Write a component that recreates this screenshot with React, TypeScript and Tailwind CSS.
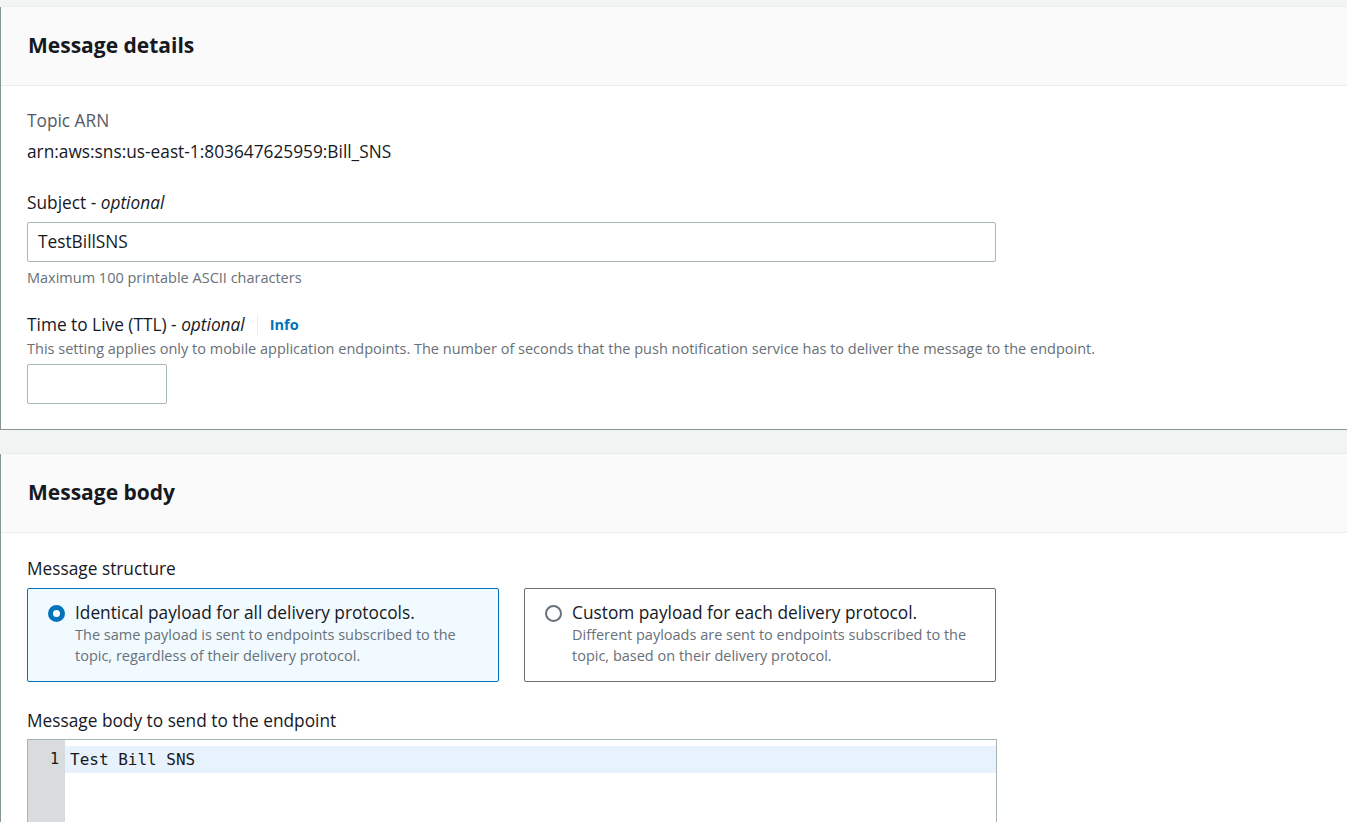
const font = { fontFamily: '"Open Sans", "Noto Sans", Arial, sans-serif' };

const Card = ({ title, children }: { title: string; children: React.ReactNode }) => (
  <section className="ml-px mr-[-40px] bg-white border-t border-[#eaeded] shadow-[-1px_1px_0_0_#879596]">
    <div className="h-[79px] flex items-center px-[27px] bg-[#fafafa] border-b border-[#eaeded]">
      <h2 className="text-[21px] leading-[28px] font-bold text-[#16191f] -mt-[2px]">{title}</h2>
    </div>
    <div className="px-[26px] pt-[19px] pb-[25px]">{children}</div>
  </section>
);

const RadioTile = ({
  checked,
  label,
  desc,
}: {
  checked: boolean;
  label: string;
  desc: string;
}) => (
  <div
    className={
      checked
        ? "w-[472px] h-[94px] rounded-[2px] border border-[#0073bb] bg-[#f1faff] flex gap-[10px] pl-[20px] pt-[13px]"
        : "w-[472px] h-[94px] rounded-[2px] border border-[#687078] bg-white flex gap-[10px] pl-[20px] pt-[13px]"
    }
  >
    <div className="pt-[3px]">
      {checked ? (
        <div className="w-[17px] h-[17px] rounded-full border-[5px] border-[#0073bb] bg-white" />
      ) : (
        <div className="w-[17px] h-[17px] rounded-full border-2 border-[#687078] bg-white" />
      )}
    </div>
    <div>
      <div className="text-[17.3px] leading-[22px] text-[#16191f]">{label}</div>
      <div className="text-[14.5px] leading-[20.5px] text-[#687078] w-[410px] mt-px">{desc}</div>
    </div>
  </div>
);

export default function App() {
  return (
    <div className="min-h-screen bg-[#f2f3f3] pt-[6px] overflow-hidden" style={font}>
      <Card title="Message details">
        <div className="text-[17.3px] leading-[22px] text-[#545b64] pt-[5px]">Topic ARN</div>
        <div className="text-[17.3px] leading-[22px] text-[#16191f] mt-[9px]">
          arn:aws:sns:us-east-1:803647625959:Bill_SNS
        </div>

        <div className="text-[17.3px] leading-[22px] text-[#16191f] mt-[29px]">
          Subject - <i>optional</i>
        </div>
        <div className="mt-[8px] w-[969px] h-[40px] rounded-[2px] border border-[#aab7b8] flex items-center px-[10px] text-[17.3px] text-[#16191f]">
          TestBillSNS
        </div>
        <div className="text-[14.5px] leading-[20px] text-[#687078] mt-[6px]">
          Maximum 100 printable ASCII characters
        </div>

        <div className="flex items-center mt-[26px]">
          <span className="text-[17.3px] leading-[22px] text-[#16191f]">
            Time to Live (TTL) - <i>optional</i>
          </span>
          <span className="ml-[12px] h-[20px] border-l border-[#eaeded]" />
          <span className="ml-[12px] text-[14.5px] font-bold text-[#0073bb]">Info</span>
        </div>
        <div className="text-[14.5px] leading-[20px] text-[#687078] mt-[3px]">
          This setting applies only to mobile application endpoints. The number of seconds that the push notification
          service has to deliver the message to the endpoint.
        </div>
        <div className="mt-[5px] w-[140px] h-[40px] rounded-[2px] border border-[#aab7b8]" />
      </Card>

      <div className="h-[24px]" />

      <Card title="Message body">
        <div className="text-[17.3px] leading-[22px] text-[#16191f] pt-[6px]">Message structure</div>
        <div className="flex gap-[25px] mt-[8px]">
          <RadioTile
            checked
            label="Identical payload for all delivery protocols."
            desc="The same payload is sent to endpoints subscribed to the topic, regardless of their delivery protocol."
          />
          <RadioTile
            checked={false}
            label="Custom payload for each delivery protocol."
            desc="Different payloads are sent to endpoints subscribed to the topic, based on their delivery protocol."
          />
        </div>

        <div className="text-[17.3px] leading-[22px] text-[#16191f] mt-[28px]">
          Message body to send to the endpoint
        </div>
        <div className="mt-[7px] w-[970px] h-[200px] border border-[#a6b3b3] border-b-0 flex">
          <div
            className="w-[37px] bg-[#d8dcdc] pt-[6px] text-right pr-[6px] leading-[27px] text-[#16191f]"
            style={{ fontFamily: '"DejaVu Sans Mono", monospace', fontSize: 15 }}
          >
            1
          </div>
          <div className="flex-1 pt-[6px]">
            <div
              className="h-[27px] bg-[#e8f2fd] pl-[5px] leading-[27px] text-[#16191f]"
              style={{ fontFamily: '"DejaVu Sans Mono", monospace', fontSize: 16 }}
            >
              Test Bill SNS
            </div>
          </div>
        </div>
      </Card>
    </div>
  );
}
